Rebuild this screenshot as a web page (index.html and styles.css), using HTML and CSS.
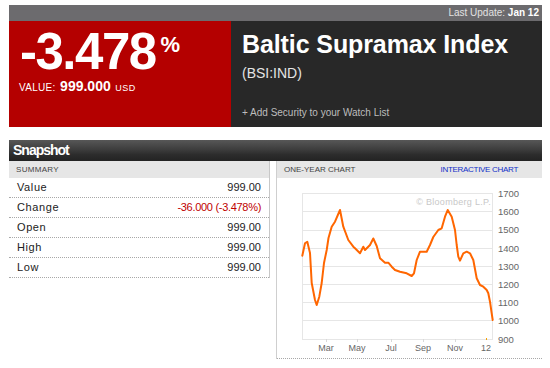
FILE: index.html
```html
<!DOCTYPE html>
<html>
<head>
<meta charset="utf-8">
<link rel="stylesheet" href="styles.css">
</head>
<body>
<div class="page">
  <div class="topbar">Last Update: <b>Jan 12</b></div>
  <div class="hero">
    <div class="change">
      <div class="big">-3.478<span class="pct">%</span></div>
      <div class="valline"><span class="vlabel">VALUE:</span> <b class="vnum">999.000</b> <span class="usd">USD</span></div>
    </div>
    <div class="info">
      <div class="title">Baltic Supramax Index</div>
      <div class="ticker">(BSI:IND)</div>
      <div class="watch">+ Add Security to your Watch List</div>
    </div>
  </div>

  <div class="snapbar">Snapshot</div>
  <div class="panels">
    <div class="summary">
      <div class="phead">SUMMARY</div>
      <div class="row"><span>Value</span><span>999.00</span></div>
      <div class="row"><span>Change</span><span class="neg">-36.000 (-3.478%)</span></div>
      <div class="row"><span>Open</span><span>999.00</span></div>
      <div class="row"><span>High</span><span>999.00</span></div>
      <div class="row"><span>Low</span><span>999.00</span></div>
    </div>
    <div class="chartpanel">
      <div class="phead chead"><span>ONE-YEAR CHART</span><span class="ilink">INTERACTIVE CHART</span></div>
      <svg class="chart" width="265" height="180" viewBox="0 0 265 180">
        <g stroke="#e6e6e6" stroke-width="1" fill="none">
          <line x1="25" y1="15.5" x2="216" y2="15.5"/>
          <line x1="25" y1="33.5" x2="216" y2="33.5"/>
          <line x1="25" y1="52.5" x2="216" y2="52.5"/>
          <line x1="25" y1="70.5" x2="216" y2="70.5"/>
          <line x1="25" y1="88.5" x2="216" y2="88.5"/>
          <line x1="25" y1="106.5" x2="216" y2="106.5"/>
          <line x1="25" y1="124.5" x2="216" y2="124.5"/>
          <line x1="25" y1="142.5" x2="216" y2="142.5"/>
          <line x1="25" y1="161.5" x2="216" y2="161.5"/>
          <line x1="25.5" y1="15" x2="25.5" y2="162"/>
          <line x1="215.5" y1="15" x2="215.5" y2="162"/>
        </g>
        <g stroke="#d8d8d8" stroke-width="1">
          <line x1="49.5" y1="161" x2="49.5" y2="164"/>
          <line x1="80.5" y1="161" x2="80.5" y2="164"/>
          <line x1="114.5" y1="161" x2="114.5" y2="164"/>
          <line x1="146.5" y1="161" x2="146.5" y2="164"/>
          <line x1="178.5" y1="161" x2="178.5" y2="164"/>
        </g>
        <line x1="209.5" y1="160" x2="209.5" y2="162" stroke="#f5a000" stroke-width="1"/>
        <text class="wm" x="214" y="27" text-anchor="end">© Bloomberg L.P.</text>
        <polyline fill="none" stroke="#ff6600" stroke-width="2" stroke-linejoin="round" stroke-linecap="round"
          points="25.3,77.7 28,65.3 30.3,63.7 33,75 34.7,105 38,122 39.7,127 42.3,118.7 44.7,105 47,85 49.7,72 51.5,60 54.7,48.7 58,43.7 63,32 66.3,48.7 71.3,62 76.3,68.7 78,70.3 83,75.3 86.3,68.7 88,72 93,67 96.3,60.5 99.7,68 103,80.3 108,84.7 111.3,84.7 114.7,88.7 118,92 123,93.7 129.7,95.3 134.7,98 137,95.3 139.7,82 143,73.7 149.7,73.7 153,67 156.3,59 161.3,52 164.7,50.3 168,38.7 170.7,32 174.7,38.7 178,52 179.7,67 181.3,78.7 183,82.7 186.3,75.3 189.7,73.7 193,75.3 196.3,82 199.7,100.3 203,107 206.3,108.7 209.7,112 211.3,115.3 213,123.7 214.7,135.3 215.7,142"/>
        <g class="ylab">
          <text x="221" y="18.5">1700</text>
          <text x="221" y="37">1600</text>
          <text x="221" y="55">1500</text>
          <text x="221" y="73.5">1400</text>
          <text x="221" y="91.5">1300</text>
          <text x="221" y="109.5">1200</text>
          <text x="221" y="128">1100</text>
          <text x="221" y="146">1000</text>
          <text x="221" y="164.5">900</text>
        </g>
        <g class="xlab" text-anchor="middle">
          <text x="49" y="172.5">Mar</text>
          <text x="80" y="172.5">May</text>
          <text x="114" y="172.5">Jul</text>
          <text x="146" y="172.5">Sep</text>
          <text x="178" y="172.5">Nov</text>
          <text x="209" y="172.5">12</text>
        </g>
      </svg>
    </div>
  </div>
</div>
</body>
</html>
```

FILE: styles.css
```css
html, body {
  margin: 0;
  padding: 0;
  background: #fff;
}
body {
  font-family: "Liberation Sans", Arial, sans-serif;
}
.page {
  width: 533px;
  margin: 5px 0 0 9px;
}
.topbar {
  height: 16px;
  line-height: 16px;
  background: #6c6b6e;
  color: #e2e2e2;
  font-size: 10px;
  text-align: right;
  padding-right: 3px;
}
.topbar b {
  color: #fff;
}
.hero {
  display: flex;
  height: 106px;
}
.change {
  width: 211px;
  background: #b40000;
  color: #fff;
  padding: 5px 0 0 11px;
}
.big {
  font-size: 51px;
  font-weight: bold;
  line-height: 51px;
  letter-spacing: -1.5px;
  white-space: nowrap;
}
.pct {
  display: inline-block;
  vertical-align: top;
  font-size: 22px;
  line-height: 22px;
  padding-top: 8px;
  margin-left: 5px;
  letter-spacing: 0;
}
.valline {
  margin-top: 1px;
  line-height: 16px;
  white-space: nowrap;
  margin-left: -1px;
}
.vlabel {
  font-size: 10px;
  letter-spacing: 0.3px;
}
.vnum {
  font-size: 14px;
}
.usd {
  font-size: 9px;
  letter-spacing: 0.6px;
}
.info {
  flex: 1;
  background: #282828;
  color: #fff;
  padding: 8px 0 0 11px;
  display: flex;
  flex-direction: column;
}
.title {
  font-size: 25px;
  font-weight: bold;
  line-height: 30px;
  letter-spacing: -0.1px;
  white-space: nowrap;
}
.ticker {
  margin-top: 5px;
  font-size: 14px;
  line-height: 18px;
  color: #e4e4e4;
}
.watch {
  margin-top: 24px;
  font-size: 10px;
  line-height: 14px;
  color: #bdbdbd;
}
.snapbar {
  margin-top: 13px;
  height: 21px;
  line-height: 21px;
  background: linear-gradient(#575757, #3d3d3d 45%, #2c2c2c 70%, #232323);
  color: #fff;
  font-size: 14px;
  font-weight: bold;
  letter-spacing: -1px;
  padding-left: 4px;
}
.panels {
  display: flex;
  align-items: flex-start;
  gap: 6px;
}
.summary {
  width: 260px;
  border-right: 1px solid #c8c8c8;
}
.phead {
  height: 17px;
  line-height: 17px;
  background: #e6e6e6;
  font-size: 8px;
  color: #444;
  padding-left: 7px;
  letter-spacing: 0.3px;
}
.row {
  display: flex;
  justify-content: space-between;
  height: 19px;
  line-height: 19px;
  border-bottom: 1px dotted #a8a8a8;
  padding: 0 8px;
  font-size: 11px;
  color: #222;
}
.row span:first-child {
  letter-spacing: 0.6px;
}
.neg {
  color: #c00000;
  letter-spacing: -0.3px;
}
.chartpanel {
  flex: 1;
  border-left: 1px solid #cfcfcf;
}
.chead {
  display: flex;
  justify-content: space-between;
  padding-right: 24px;
  letter-spacing: 0;
}
.ilink {
  color: #1030c8;
  letter-spacing: -0.3px;
}
.chart {
  display: block;
  border-bottom: 1px dotted #a8a8a8;
}
.wm {
  font-family: "Liberation Sans", Arial, sans-serif;
  font-size: 9px;
  fill: #c8c8c8;
  letter-spacing: 0.3px;
}
.ylab text {
  font-family: "Liberation Sans", Arial, sans-serif;
  font-size: 9.5px;
  fill: #666;
}
.xlab text {
  font-family: "Liberation Sans", Arial, sans-serif;
  font-size: 9px;
  fill: #666;
}
```
